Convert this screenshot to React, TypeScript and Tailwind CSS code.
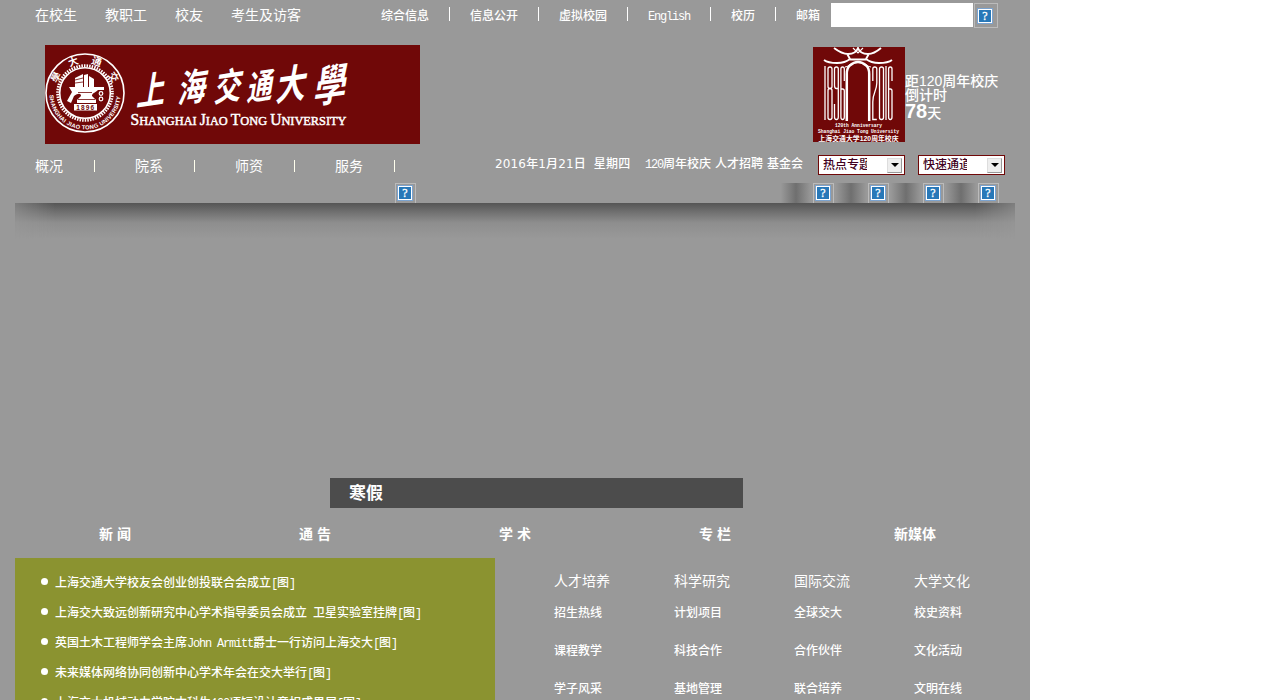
import React from "react";

const CJK = "font-['Liberation_Sans','Noto_Sans_CJK_SC',sans-serif]";

function Mixed({ children }: { children: string }) {
  const parts = children.split(/([\x20-\x7e]+)/).filter(Boolean);
  return (
    <>
      {parts.map((p, i) =>
        /^[\x20-\x7e]+$/.test(p) ? (
          <span key={i} className="font-['Liberation_Mono',monospace] tracking-[-1.2px]">{p}</span>
        ) : (
          <span key={i}>{p}</span>
        )
      )}
    </>
  );
}

function Missing({ className = "" }: { className?: string }) {
  return (
    <span className={"block shrink-0 overflow-hidden border border-[#bbb] " + className}>
      <svg width="18" height="18" viewBox="0 0 18 18" className="block">
        <rect x="1" y="1" width="16" height="16" fill="#7ba3cf" />
        <rect x="2" y="2" width="14" height="14" fill="#fff" />
        <rect x="3" y="3" width="12" height="12" fill="#2878b8" />
        <text x="9" y="13.200" textAnchor="middle" fontSize="12" stroke="#fff" strokeWidth=".3" fill="#fff" fontFamily="Liberation Serif, serif">?</text>
      </svg>
    </span>
  );
}

function Seal() {
  return (
    <g fill="none" stroke="#fff">
      <circle cx="40" cy="48" r="39" strokeWidth="1.6" />
      <circle cx="40" cy="48" r="27.3" strokeWidth="3" strokeDasharray="1.5 1.1" />
      <circle cx="40" cy="48" r="25.3" strokeWidth="1.6" />
      <g fill="#fff" stroke="none">
        <path d="M30 33l8-4v13h-8zM39 30l4-1v13h-4zM44 31l5 3v8h-5z" />
        <path d="M24 42h35v3h-6c-3 3-6 3-6 6l4 4v3H32v-3l4-4c0-3-3-3-7 0l-3 7-4-2 5-9z" />
        <rect x="29" y="59" width="23" height="6.500" />
        <text x="40.8" y="64.7" textAnchor="middle" fontSize="6.5" fontWeight="bold" fill="#700808" fontFamily="Liberation Sans, sans-serif" letterSpacing="1.2">1896</text>
      </g>
      <path d="M30 35l8-2M30 38l8-1M33 47.500h14M33 54.500h17" stroke="#700808" strokeWidth=".8" />
      <circle cx="56" cy="48.500" r="1.8" strokeWidth="1.200" />
      <circle cx="56" cy="54" r="1.8" strokeWidth="1.200" />
      <path id="sealarc" d="M4.5 49a35.5 35.5 0 0 0 71 0" stroke="none" />
      <text fontSize="5.8" fontWeight="bold" fill="#fff" stroke="none" fontFamily="Liberation Sans, sans-serif">
        <textPath href="#sealarc" textLength="108" startOffset="1">SHANGHAI JIAO TONG UNIVERSITY</textPath>
      </text>
      <g fill="#fff" stroke="none" fontSize="10" fontWeight="bold" textAnchor="middle" fontFamily="Noto Sans CJK SC, sans-serif">
        <text transform="translate(14 34) rotate(-60)">學</text>
        <text transform="translate(29.5 20) rotate(-20)">大</text>
        <text transform="translate(50.500 20) rotate(20)">通</text>
        <text transform="translate(65.500 34) rotate(58)">交</text>
      </g>
    </g>
  );
}

const brush = [
  ["上", 105, 59, 34], ["海", 146, 56, 34], ["交", 182, 55, 33],
  ["通", 214, 54, 31], ["大", 245, 54, 36], ["學", 284, 56, 39],
] as const;

function Logo() {
  return (
    <svg width="375" height="99" viewBox="0 0 375 99" className="block shrink-0 bg-[#700808]">
      <Seal />
      <g fill="#fff" fontWeight="bold" textAnchor="middle" fontFamily="Noto Sans CJK SC, sans-serif">
        {brush.map(([c, x, y, s]) => (
          <text key={c} fontSize={s} transform={`translate(${x} ${y}) skewX(-18) rotate(-9) scale(.8 1.15)`}>{c}</text>
        ))}
      </g>
      <g fill="#fff" stroke="#fff" strokeWidth=".5" fontFamily="Liberation Serif, serif">
        <text x="85.5" y="80" fontSize="13.500" textLength="216" lengthAdjust="spacingAndGlyphs">
          <tspan fontSize="17">S</tspan>HANGHAI <tspan fontSize="17">J</tspan>IAO <tspan fontSize="17">T</tspan>ONG <tspan fontSize="17">U</tspan>NIVERSITY
        </text>
      </g>
    </svg>
  );
}

function Anniversary() {
  return (
    <svg width="92" height="95" viewBox="0 0 92 95" className="block shrink-0 bg-[#700808]">
      <g fill="none" stroke="#fff" strokeWidth="1.900">
        <path d="M21 1q8 6 14 6q8 0 10-6q2 6 10 6q6 0 13-6" />
        <path d="M40 1l5 5l5-5" strokeWidth="1.200" />
        <path d="M34.500 7.500l2.500 4.500q-5 4-13 4q-9 0-13-3M55.500 7.500l-2.500 4.500q5 4 13 4q9 0 13-3M36 12.500h18" />
        <path d="M33.800 74V27q0-6 3-8.500q4-3.500 8.200-3.500q4.200 0 8.200 3.500q3 2.500 3 8.500v47" strokeWidth="2.500" />
        <path d="M32 20q5-1 7-4M58 20q-5-1-7-4" strokeWidth="1.200" />
        <g strokeWidth="1.3">
          <path d="M12 19v54" />
          <rect x="15" y="20" width="4" height="21.500" rx="2" /><rect x="15" y="41.500" width="4" height="31" rx="2" />
          <path d="M25.300 41.500h-2q-1.800 0-1.800-3V22q0-2 1.900-2t1.900 2v48q0 2.500-1.900 2.500t-1.900-2.500v-13" />
          <path d="M31.300 34V22q0-2-1.700-2t-1.700 2v48q0 2.500 1.700 2.500t1.700-2.500V44q0-2-1.700-2h-1.700" />
          <path d="M59.800 34V22q0-2 2-2t2 2v14q0 4-2 9t-2 10v17.500h4" />
          <rect x="66.500" y="20" width="4" height="52.500" rx="2" />
          <path d="M73 19v54M79 34V22q0-2-1.700-2t-1.700 2v48q0 2.500 1.700 2.500t1.700-2.500V44q0-2-1.700-2h-1.700" />
        </g>
      </g>
      <g fill="#fff" fontWeight="bold" textAnchor="middle" fontFamily="Liberation Mono, Noto Sans CJK SC, monospace">
        <text x="45.500" y="80.300" fontSize="5.200" textLength="47" lengthAdjust="spacingAndGlyphs">120th Anniversary</text>
        <text x="45.500" y="86.200" fontSize="5.200" textLength="81" lengthAdjust="spacingAndGlyphs">Shanghai Jiao Tong University</text>
        <text x="45.500" y="94" fontSize="6.800" textLength="80" fontFamily="Liberation Sans, Noto Sans CJK SC, sans-serif">上海交通大学120周年校庆</text>
      </g>
    </svg>
  );
}

function Select({ children }: { children: string }) {
  return (
    <div className="flex h-5 w-[87px] items-center justify-between border border-[#700808] bg-white pr-0.5 pl-1 text-xs text-[#400020]">
      <span className="w-11 overflow-hidden whitespace-nowrap">{children}</span>
      <span className="flex size-[15px] items-center justify-center border border-r-[#999] border-b-[#999] border-[#ddd] bg-[#eee]">
        <svg width="8" height="4"><path d="M0 0h8L4 4z" fill="#000" /></svg>
      </span>
    </div>
  );
}

const columns = [
  ["人才培养", "招生热线", "课程教学", "学子风采"],
  ["科学研究", "计划项目", "科技合作", "基地管理"],
  ["国际交流", "全球交大", "合作伙伴", "联合培养"],
  ["大学文化", "校史资料", "文化活动", "文明在线"],
];
const news = [
  "上海交通大学校友会创业创投联合会成立[图]",
  "上海交大致远创新研究中心学术指导委员会成立 卫星实验室挂牌[图]",
  "英国土木工程师学会主席John Armitt爵士一行访问上海交大[图]",
  "未来媒体网络协同创新中心学术年会在交大举行[图]",
  "上海交大机械动力学院本科生100项短设计竞相成果展[图]",
];

export default function App() {
  return (
    <div className="h-[700px] w-full overflow-hidden bg-white">
      <div className={"h-full w-[1030px] overflow-hidden bg-[#999] px-[15px] text-xs font-medium whitespace-nowrap text-white " + CJK}>
        <header className="h-[203px]">
          <div className="flex h-[45px] items-start pl-5">
            <nav className="flex h-[30px] w-[346px] items-center gap-7 text-sm font-normal">
              <a>在校生</a><a>教职工</a><a>校友</a><a>考生及访客</a>
            </nav>
            <nav className="flex h-8 w-[450px] items-center">
              <a className="w-[68px]">综合信息</a><i className="mb-1 h-[14px] w-px bg-white" />
              <a className="w-[88px] pl-5">信息公开</a><i className="mb-1 h-[14px] w-px bg-white" />
              <a className="w-[88px] pl-5">虚拟校园</a><i className="mb-1 h-[14px] w-px bg-white" />
              <a className="w-[82px] pl-5"><Mixed>English</Mixed></a><i className="mb-1 h-[14px] w-px bg-white" />
              <a className="w-16 pl-5">校历</a><i className="mb-1 h-[14px] w-px bg-white" />
              <a className="pl-5">邮箱</a>
            </nav>
            <div className="mt-[3px] h-6 w-[142px] bg-white" />
            <Missing className="mt-[3px] ml-px h-[25px] w-6 pt-[3px] pl-px" />
          </div>
          <div className="flex h-[99px] items-start pl-[30px]">
            <Logo />
            <div className="mt-0.5 ml-[393px] flex items-start">
              <Anniversary />
              <div className="pt-[27px] text-sm leading-[14px]">
                <div>距120周年校庆</div>
                <div>倒计时</div>
                <div className="leading-[18px]"><b className="text-[20px]">78</b>天</div>
              </div>
            </div>
          </div>
          <div className="flex h-[39px] items-start pl-5">
            <nav className="flex h-11 w-[460px] items-center text-sm font-normal">
              {["概况", "院系", "师资", "服务"].map((t) => (
                <div key={t} className="flex w-[100px] items-center"><a className="w-[59px]">{t}</a><i className="h-3 w-px bg-[#ffe]" /></div>
              ))}
            </nav>
            <span className="mt-3 w-[150px] font-['DejaVu_Sans','Noto_Sans_CJK_SC',sans-serif] text-xs tracking-[0.150px]">2016年1月21日&nbsp; 星期四</span>
            <span className="mt-3 flex w-[173px] gap-1"><a><Mixed>120周年校庆</Mixed></a><a>人才招聘</a><a>基金会</a></span>
            <div className="mt-[11px] flex gap-[13px]"><Select>热点专题</Select><Select>快速通道</Select></div>
          </div>
          <div className="flex h-5 items-start pl-[380px]">
            <Missing className="h-[21px] w-[21px] border-b-0" />
            <div className="ml-[363px] flex">
              {[0, 1, 2, 3].map((n) => (
                <div key={n} className="flex h-5 w-[55px] overflow-hidden">
                  <div className="h-full w-[34px] bg-[linear-gradient(to_right,#999_5%,#6f6f6f_50%,#999_95%)]" />
                  <Missing className="h-[21px] w-[21px] border-b-0" />
                </div>
              ))}
            </div>
          </div>
        </header>
        <div className="h-[275px]">
          <div className="h-9 bg-[linear-gradient(#555,#707070_25%,#8e8e8e_55%,#999)] [mask-image:linear-gradient(to_right,rgba(0,0,0,.4),#000_40px,#000_960px,rgba(0,0,0,.4))]" />
        </div>
        <div className="ml-[315px] flex h-[30px] w-[413px] items-center bg-[#4c4c4c] pt-[3px] pl-[19px] text-[17px] font-bold">寒假</div>
        <div className="flex h-[50px] text-sm font-bold">
          {["新 闻", "通 告", "学 术", "专 栏", "新媒体"].map((t) => <div key={t} className="h-[50px] w-[200px] pt-4 text-center leading-5">{t}</div>)}
        </div>
        <div className="flex">
          <ul className="h-[160px] w-[480px] shrink-0 bg-[#8b9330] pt-2.5 pl-[26px]">
            {news.map((t) => (
              <li key={t} className="flex h-[30px] items-center"><i className="mr-[7px] mb-[3px] size-[7px] rounded-full bg-white" /><span>{<Mixed>{t}</Mixed>}</span></li>
            ))}
          </ul>
          <div className="flex pl-[59px]">
            {columns.map((c) => (
              <div key={c[0]} className="w-[120px] pt-[13px]">
                <h3 className="h-[23px] text-sm leading-5 font-normal">{c[0]}</h3>
                {c.slice(1).map((t) => <div key={t} className="h-[38px] leading-[38px]">{t}</div>)}
              </div>
            ))}
          </div>
        </div>
      </div>
    </div>
  );
}
